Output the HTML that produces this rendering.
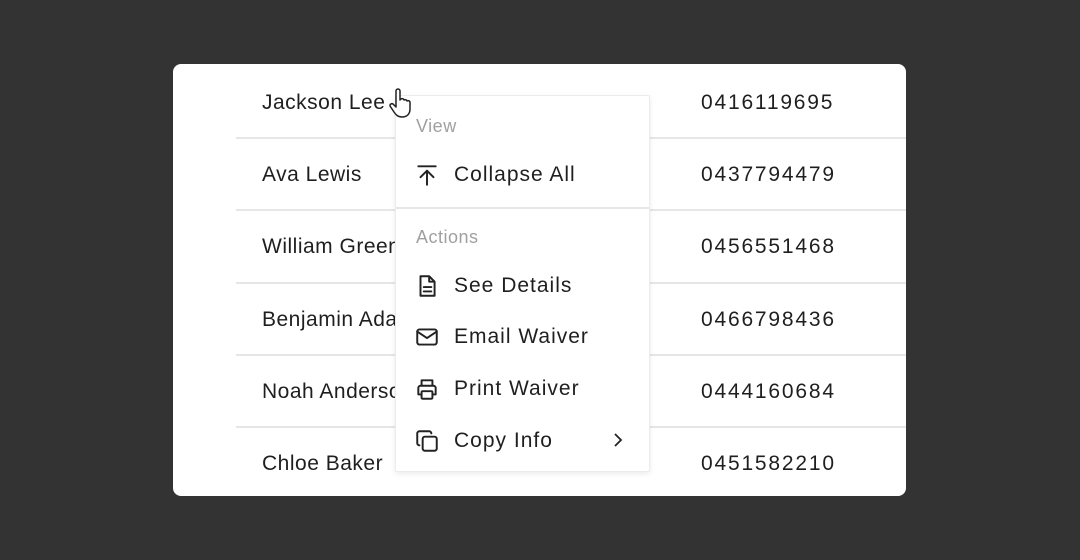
<!DOCTYPE html>
<html><head><style>
body{margin:0;width:1080px;height:560px;background:#333;font-family:"Liberation Sans",sans-serif;position:relative;overflow:hidden}
.card{position:absolute;left:173px;top:64px;width:733px;height:432px;background:#fff;border-radius:8px;overflow:hidden}
.line{position:absolute;left:63px;right:0;height:2px;background:#e6e6e6}
.t{position:absolute;font-size:21px;color:#1f1f1f;line-height:24px;letter-spacing:0.5px}
.p{letter-spacing:1.8px}
.menu{position:absolute;left:395px;top:95px;width:253px;height:375px;background:#fff;border:1px solid #ececec;box-shadow:0 2px 6px rgba(0,0,0,.08);border-radius:2px}
.m{position:absolute;left:58px;font-size:21px;color:#1f1f1f;line-height:24px;letter-spacing:1px}
.h{position:absolute;left:20px;font-size:18px;color:#a0a0a0;line-height:22px;letter-spacing:0.5px}
svg.i{position:absolute;left:18px;width:26px;height:26px;fill:none;stroke:#222;stroke-width:1.8;stroke-linecap:round;stroke-linejoin:round}
</style></head><body>
<div class="card">
<div class="line" style="top:73px"></div>
<div class="line" style="top:145px"></div>
<div class="line" style="top:218px"></div>
<div class="line" style="top:290px"></div>
<div class="line" style="top:362px"></div>
<div class="t" style="left:89px;top:27px">Jackson Lee</div>
<div class="t" style="left:89px;top:99px">Ava Lewis</div>
<div class="t" style="left:89px;top:171px">William Green</div>
<div class="t" style="left:89px;top:244px">Benjamin Adams</div>
<div class="t" style="left:89px;top:316px">Noah Anderson</div>
<div class="t" style="left:89px;top:388px">Chloe Baker</div>
<div class="t p" style="left:528px;top:27px">0416119695</div>
<div class="t p" style="left:528px;top:99px">0437794479</div>
<div class="t p" style="left:528px;top:171px">0456551468</div>
<div class="t p" style="left:528px;top:244px">0466798436</div>
<div class="t p" style="left:528px;top:316px">0444160684</div>
<div class="t p" style="left:528px;top:388px">0451582210</div>
</div>
<div class="menu">
<div class="h" style="top:19px">View</div>
<svg class="i" style="top:66px" viewBox="0 0 24 24"><path d="M4 4h16M12 21V8M6 14l6-6 6 6"/></svg>
<div class="m" style="top:67px">Collapse All</div>
<div style="position:absolute;left:0;right:0;top:111px;height:2px;background:#e6e6e6"></div>
<div class="h" style="top:130px">Actions</div>
<svg class="i" style="top:177px" viewBox="0 0 24 24"><path d="M6 3h8l5 5v13H6zM14 3v5h5M9 13h7M9 17h7"/></svg>
<div class="m" style="top:178px">See Details</div>
<svg class="i" style="top:228px" viewBox="0 0 24 24"><rect x="3" y="5" width="18" height="14" rx="2"/><path d="M3 7l9 6 9-6"/></svg>
<div class="m" style="top:229px">Email Waiver</div>
<svg class="i" style="top:280px" viewBox="0 0 24 24"><path d="M7 9V4h10v5M7 17H4v-6a2 2 0 012-2h12a2 2 0 012 2v6h-3"/><rect x="7" y="14" width="10" height="7" rx="1"/></svg>
<div class="m" style="top:281px">Print Waiver</div>
<svg class="i" style="top:332px" viewBox="0 0 24 24"><rect x="8" y="8" width="13" height="13" rx="2"/><path d="M5 16a2 2 0 01-2-2V5a2 2 0 012-2h9a2 2 0 012 2"/></svg>
<div class="m" style="top:333px">Copy Info</div>
<svg style="position:absolute;left:212px;top:334px;width:20px;height:20px;fill:none;stroke:#222;stroke-width:1.8" viewBox="0 0 20 20"><path d="M7 4l6 6-6 6"/></svg>
</div>
<svg style="position:absolute;left:388px;top:88px;width:26px;height:32px" viewBox="0 0 26 32"><path d="M8 3a2 2 0 014 0v9l1-1a2 2 0 013 1a2 2 0 013 1a2 2 0 013 1v7c0 5-3 8-8 8-4 0-6-2-8-5l-4-6a2 2 0 013-2l3 3z" fill="#fff" stroke="#222" stroke-width="1.5" stroke-linejoin="round"/></svg>
</body></html>
